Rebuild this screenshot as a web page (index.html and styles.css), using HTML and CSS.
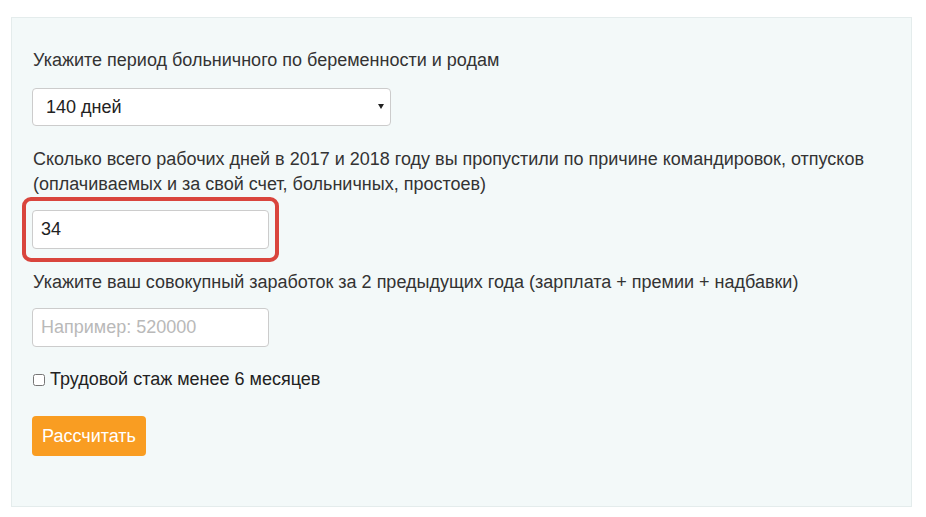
FILE: index.html
```html
<!DOCTYPE html>
<html lang="ru">
<head>
<meta charset="utf-8">
<title>Калькулятор</title>
<link rel="stylesheet" href="styles.css">
</head>
<body>
<form class="panel">
  <div class="group">
    <label class="label label-first">Укажите период больничного по беременности и родам</label>
    <div class="select-wrap">
      <select class="control select">
        <option>140 дней</option>
      </select>
    </div>
  </div>
  <div class="group">
    <label class="label">Сколько всего рабочих дней в 2017 и 2018 году вы пропустили по причине командировок, отпусков (оплачиваемых и за свой счет, больничных, простоев)</label>
    <div class="input-wrap highlighted">
      <input class="control input" type="text" value="34">
    </div>
  </div>
  <div class="group group-last">
    <label class="label">Укажите ваш совокупный заработок за 2 предыдущих года (зарплата + премии + надбавки)</label>
    <div class="input-wrap">
      <input class="control input" type="text" placeholder="Например: 520000">
    </div>
  </div>
  <div class="group check-group">
    <label class="check"><input type="checkbox" class="checkbox"> Трудовой стаж менее 6 месяцев</label>
  </div>
  <button type="button" class="btn">Рассчитать</button>
</form>
</body>
</html>
```

FILE: styles.css
```css
html, body {
  margin: 0;
  padding: 0;
  background: #ffffff;
}
body {
  font-family: "Liberation Sans", Arial, sans-serif;
  font-size: 18px;
  color: #333333;
  padding: 17px 14px 10px 11px;
}
.panel {
  background: #f3f9f9;
  border: 1px solid #e4ecec;
  padding: 30px 20px 50px 20px;
}
.group {
  margin-bottom: 21px;
}
.group-last {
  margin-bottom: 20px;
}
.label {
  display: block;
  line-height: 25px;
  margin-bottom: 13px;
  margin-left: 1px;
}
.label-first {
  margin-bottom: 15px;
}
.control {
  font-family: "Liberation Sans", Arial, sans-serif;
  font-size: 18px;
  color: #222;
  background: #fff;
  border: 1px solid #cccccc;
  border-radius: 4px;
  height: 38px;
  box-sizing: border-box;
  outline: none;
  display: block;
}
.select-wrap {
  position: relative;
  width: 359px;
}
.select {
  -webkit-appearance: none;
  appearance: none;
  width: 359px;
  padding: 0 13px;
}
.select-wrap::after {
  content: "";
  position: absolute;
  right: 7px;
  top: 16px;
  border-left: 3px solid transparent;
  border-right: 3px solid transparent;
  border-top: 5px solid #222;
}
.input-wrap {
  position: relative;
  width: 237px;
}
.input {
  width: 237px;
  height: 39px;
  padding: 0 8px;
}
.input::placeholder {
  color: #b9b9b9;
}
.highlighted::before {
  content: "";
  position: absolute;
  left: -10px;
  right: -10px;
  top: -13px;
  bottom: -13px;
  border: 4px solid #d9453d;
  border-radius: 9px;
  pointer-events: none;
}
.check-group {
  margin-bottom: 24px;
}
.check {
  display: flex;
  align-items: center;
  line-height: 25px;
  color: #222;
}
.checkbox {
  width: 12px;
  height: 12px;
  margin: 0 5px 0 1px;
}
.btn {
  display: block;
  font-family: "Liberation Sans", Arial, sans-serif;
  font-size: 18px;
  color: #fff;
  background: #f99d22;
  border: none;
  border-radius: 4px;
  height: 40px;
  width: 114px;
  padding: 0;
  cursor: pointer;
}
```
